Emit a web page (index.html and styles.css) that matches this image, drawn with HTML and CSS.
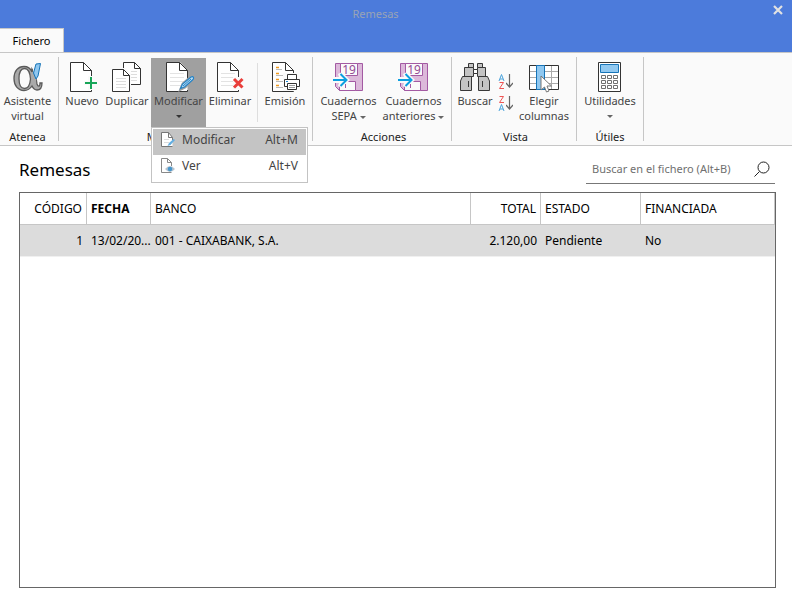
FILE: index.html
```html
<!DOCTYPE html>
<html lang="es">
<head>
<meta charset="utf-8">
<title>Remesas</title>
<link rel="stylesheet" href="styles.css">
</head>
<body>
<svg class="defs" aria-hidden="true">
  <symbol id="page" viewBox="0 0 32 32">
    <path d="M15.500 1.500H1.500V30.500H22.500V9.500z" fill="#fff"/>
    <path d="M22.500 25V9.500L14.500 1.500H1.500V30.500H22.500V29" fill="none" stroke="#333"/>
    <path d="M14.500 1.500V9.500H22.500" fill="none" stroke="#333"/>
    <path d="M5 12.500H19M5 16.500H19M5 20.500H19M5 24.500H19" stroke="#e3e3e3"/>
  </symbol>
  <symbol id="floppy" viewBox="0 0 32 32">
    <path d="M2.500 2.500H29.500V29.500H6.500L2.500 25.500z" fill="#dcb9da" stroke="#a35aa3"/>
    <path d="M7.500 2.500H24.500V14.500H7.500z" fill="#fafafa" stroke="#a35aa3"/>
    <path d="M9 20.500H22.500V29.500H6.500V22z" fill="#fafafa" stroke="#a35aa3"/>
    <path d="M0 16H6L5 13L9 11L17 19L9 27L5 25L6 22H0z" fill="#fafafa"/>
    <path d="M12.500 23V27" stroke="#a35aa3"/>
    <path d="M0 19H13M7.500 13L13.500 19L7.500 25" fill="none" stroke="#0c9fe0" stroke-width="2"/>
  </symbol>
  <symbol id="down" viewBox="0 0 7 16">
    <path d="M3.500 1V14M0 10L3.500 14L7 10" fill="none" stroke="#666" stroke-width="1.200"/>
  </symbol>
</svg>

<header class="titlebar">
  <h1 class="window-title">Remesas</h1>
  <button class="close" type="button" aria-label="Cerrar"><svg width="10" height="10" viewBox="0 0 10 10"><path d="M1 1L9 9M9 1L1 9" stroke="#e2e2e2" stroke-width="2.200"/></svg></button>
  <button class="tab" type="button">Fichero</button>
</header>

<nav class="ribbon">
  <section class="group group-atenea">
    <div class="tools">
      <button class="tool" type="button">
        <svg class="icon" viewBox="0 0 32 32">
          <path d="M20 8L23 13L26 9C25 14 24 18 25 23C26 26 28 26 28 22L30 22C30 27 28 29 25 29C22 29 21 27 20 25C18 28 15 29.500 12 29.500C6 29.500 2 24.500 2 17.500C2 10 6 5.500 12 5.500C16 5.500 18.500 7.500 20 11z" fill="#aaa" stroke="#5a5a5a" stroke-width="1.300"/>
          <path d="M12.500 7.500C9 7.500 7 11 7 17.500C7 24 9 27.500 12.500 27.500C16 27.500 18 24 18.500 18C18 11 16 7.500 12.500 7.500z" fill="#fafafa" stroke="#5a5a5a" stroke-width="1.300"/>
          <path d="M22 1H32V10L26 21L21 10z" fill="#fafafa"/>
          <path d="M24 3L28.500 2.500L26 15L24 18L21.500 12z" fill="#90c8f0" stroke="#1674b8"/>
        </svg>
        <span>Asistente<br>virtual</span>
      </button>
    </div>
    <h2 class="group-name">Atenea</h2>
  </section>

  <section class="group group-edit">
    <div class="tools">
      <button class="tool tool-new" type="button">
        <svg class="icon" viewBox="0 0 32 32">
          <path d="M25.500 18V9.500L17.500 1.500H4.500V30.500H25.500V28" fill="#fff" stroke="#333"/>
          <path d="M17.500 1.500V9.500H25.500" fill="none" stroke="#333"/>
          <path d="M24 15V29M18 22H32" stroke="#fafafa" stroke-width="4"/>
          <path d="M25 16V28M19 22H31" stroke="#18a558" stroke-width="2"/>
        </svg>
        <span>Nuevo</span>
      </button>
      <button class="tool tool-copy" type="button">
        <svg class="icon" viewBox="0 0 32 32">
          <path d="M12.500 1.500H23.500L29.500 7.500V23.500H12.500z" fill="#fff" stroke="#333"/>
          <path d="M23.500 1.500V7.500H29.500" fill="none" stroke="#333"/>
          <path d="M20 10.500H26M20 13.500H26M20 16.500H26M20 19.500H26" stroke="#ddd"/>
          <path d="M0 7H14L20 13V32H0z" fill="#fafafa"/>
          <path d="M1.500 8.500H12.500L18.500 14.500V30.500H1.500z" fill="#fff" stroke="#333"/>
          <path d="M12.500 8.500V14.500H18.500" fill="none" stroke="#333"/>
          <path d="M5 17.500H15M5 20.500H15M5 23.500H15M5 26.500H15" stroke="#ddd"/>
        </svg>
        <span>Duplicar</span>
      </button>
      <div class="dropdown">
        <button class="tool tool-modify" type="button" aria-expanded="true">
          <svg class="icon" viewBox="0 0 32 32">
            <use href="#page" x="2" width="32" height="32"/>
            <path d="M18 28L20 23L29 15L31 17L22 26z" fill="#a0a0a0" stroke="#a0a0a0" stroke-width="3"/>
            <path d="M17.500 27.500L19.500 23L28 16Q30 15 30.500 16.500Q31 18 29.500 19L21.500 26z" fill="#b8dcf4" stroke="#2583c6" stroke-width="1.200"/>
            <path d="M20 25L28 18" stroke="#2583c6"/>
          </svg>
          <span>Modificar</span>
          <i class="caret"></i>
        </button>
        <div class="menu" role="menu">
          <button class="menu-item is-active" type="button" role="menuitem">
            <svg class="menu-icon" viewBox="0 0 16 16">
              <path d="M12.500 8V5.500L8.500 .5H1.500V14.500H12.500" fill="#fff" stroke="#777"/>
              <path d="M8.500 .5V5.500H12.500" fill="none" stroke="#777"/>
              <path d="M4 7.500H9M4 10.500H9" stroke="#ddd"/>
              <path d="M7.500 14L9 11L13.500 7L15 8L10.500 13z" fill="#64aee0"/>
            </svg>
            <span>Modificar</span><kbd>Alt+M</kbd>
          </button>
          <button class="menu-item" type="button" role="menuitem">
            <svg class="menu-icon" viewBox="0 0 16 16">
              <path d="M11.500 8V4.500L7.500 .5H1.500V14.500H11.500" fill="#fff" stroke="#888"/>
              <path d="M7.500 .5V4.500H11.500" fill="none" stroke="#888"/>
              <path d="M5 11Q10 5 15 11Q10 17 5 11z" fill="#b8c4ce"/>
              <circle cx="10" cy="11" r="2.300" fill="#4796cc"/>
            </svg>
            <span>Ver</span><kbd>Alt+V</kbd>
          </button>
        </div>
      </div>
      <button class="tool tool-delete" type="button">
        <svg class="icon" viewBox="0 0 32 32">
          <use href="#page" x="2" width="32" height="32"/>
          <path d="M19 16H32V28H19z" fill="#fafafa"/>
          <path d="M20 18L28.500 26.500M28.500 18L20 26.500" stroke="#e93e3a" stroke-width="3"/>
        </svg>
        <span>Eliminar</span>
      </button>
      <span class="divider"></span>
      <button class="tool tool-issue" type="button">
        <svg class="icon" viewBox="0 0 32 32">
          <path d="M24.500 12V9.500L16.500 1.500H3.500V30.500H24.500V28" fill="#fff" stroke="#333"/>
          <path d="M16.500 1.500V9.500H24.500" fill="none" stroke="#333"/>
          <path d="M7 6.500H10M7 12.500H10M7 18.500H10M7 24.500H10" stroke="#f09a20" stroke-width="1.500"/>
          <path d="M7 8.500H13M7 14.500H15M7 20.500H14M7 26.500H14" stroke="#bbb"/>
          <path d="M14 12H32V30H14z" fill="#fafafa"/>
          <path d="M18.500 19V13.500H27.500V19M18 25.500H15.500V18.500H30.500V25.500H28" fill="#fff" stroke="#333"/>
          <path d="M18.500 22.500H27.500V28.500H18.500z" fill="#fff" stroke="#333"/>
          <path d="M20 24.500H26M20 26.500H26" stroke="#999"/>
          <path d="M17 20.500H19" stroke="#1684d0"/>
        </svg>
        <span>Emisión</span>
      </button>
    </div>
    <h2 class="group-name">Mantenimiento</h2>
  </section>

  <section class="group group-actions">
    <div class="tools">
      <button class="tool tool-book" type="button">
        <svg class="icon" viewBox="0 0 32 32"><use href="#floppy" width="32" height="32"/><text x="16" y="13" class="floppy-day">19</text></svg>
        <span>Cuadernos<br>SEPA <i class="caret"></i></span>
      </button>
      <button class="tool tool-book" type="button">
        <svg class="icon" viewBox="0 0 32 32"><use href="#floppy" width="32" height="32"/><text x="16" y="13" class="floppy-day">19</text></svg>
        <span>Cuadernos<br>anteriores <i class="caret"></i></span>
      </button>
    </div>
    <h2 class="group-name">Acciones</h2>
  </section>

  <section class="group group-view">
    <div class="tools">
      <button class="tool tool-find" type="button">
        <svg class="icon" viewBox="0 0 32 32">
          <g fill="#c4c4c4" stroke="#383838">
            <path d="M9.500 2.500H14.500V6.500H9.500zM18.500 2.500H23.500V6.500H18.500z"/>
            <path d="M5.500 6.500H14.500V15.500H5.500zM18.500 6.500H26.500V15.500H18.500z"/>
            <path d="M14.500 8.500H18.500V12.500H14.500z" fill="#fff"/>
            <path d="M3.500 15.500H12.500V29.500H1.500V20zM19.500 15.500H28.500L30.500 20V29.500H19.500z"/>
            <path d="M9.500 20V26M23.500 20V26"/>
          </g>
        </svg>
        <span>Buscar</span>
      </button>
      <div class="sorts">
        <button class="sort" type="button" aria-label="Orden ascendente">
          <svg width="16" height="18" viewBox="0 0 16 18"><g fill="none"><path d="M1 8L3.500 1.500L6 8M2 6H5" stroke="#4aa3dc"/><path d="M1.500 9.500H5.500L1.500 15.500H6" stroke="#ee5555"/></g><use href="#down" x="8" y="0" width="7" height="16"/></svg>
        </button>
        <button class="sort" type="button" aria-label="Orden descendente">
          <svg width="16" height="18" viewBox="0 0 16 18"><g fill="none"><path d="M1.500 1.500H5.500L1.500 7.500H6" stroke="#ee5555"/><path d="M1 16L3.500 9.500L6 16M2 14H5" stroke="#4aa3dc"/></g><use href="#down" x="8" y="0" width="7" height="16"/></svg>
        </button>
      </div>
      <button class="tool tool-columns" type="button">
        <svg class="icon" viewBox="0 0 32 32">
          <path d="M1.500 4.500H30.500V28.500H1.500z" fill="#fff" stroke="#333"/>
          <path d="M2 10.500H30M2 16.500H30M2 22.500H30M23.500 5V28" stroke="#aaa"/>
          <path d="M8.500 4.500H16.500V28.500H8.500z" fill="#90c8f0" stroke="#1674b8"/>
          <path d="M13 15V29L16.500 26L18.500 31L21 30L19 25H23.500z" fill="#fff" stroke="#777"/>
        </svg>
        <span>Elegir<br>columnas</span>
      </button>
    </div>
    <h2 class="group-name">Vista</h2>
  </section>

  <section class="group group-utils">
    <div class="tools">
      <button class="tool tool-utils" type="button">
        <svg class="icon" viewBox="0 0 32 32">
          <path d="M4.500 1.500H26.500V30.500H4.500z" fill="#fff" stroke="#333"/>
          <path d="M6.500 3.500H24.500V11.500H6.500z" fill="#90c8f0" stroke="#1674b8"/>
          <path d="M7.500 14.500H11.500V17.500H7.500zM13.500 14.500H17.500V17.500H13.500zM19.500 14.500H23.500V17.500H19.500zM7.500 19.500H11.500V22.500H7.500zM13.500 19.500H17.500V22.500H13.500zM19.500 19.500H23.500V22.500H19.500zM7.500 24.500H11.500V27.500H7.500zM13.500 24.500H17.500V27.500H13.500zM19.500 24.500H23.500V27.500H19.500z" fill="#fff" stroke="#707070"/>
        </svg>
        <span>Utilidades</span>
        <i class="caret"></i>
      </button>
    </div>
    <h2 class="group-name">Útiles</h2>
  </section>
</nav>

<main class="content">
  <div class="heading">
    <h2 class="page-title">Remesas</h2>
    <div class="search">
      <input type="search" placeholder="Buscar en el fichero (Alt+B)" aria-label="Buscar en el fichero">
      <svg width="16" height="16" viewBox="0 0 16 16"><circle cx="9.500" cy="6.500" r="5.500" fill="none" stroke="#222"/><path d="M5.500 10.500L.5 15.500" stroke="#222"/></svg>
    </div>
  </div>
  <div class="grid-frame">
    <table class="grid">
      <colgroup><col class="c-code"><col class="c-date"><col><col class="c-total"><col class="c-state"><col class="c-fin"></colgroup>
      <thead>
        <tr><th class="num">CÓDIGO</th><th class="sorted">FECHA</th><th>BANCO</th><th class="num">TOTAL</th><th>ESTADO</th><th>FINANCIADA</th></tr>
      </thead>
      <tbody>
        <tr><td class="num">1</td><td>13/02/20...</td><td>001 - CAIXABANK, S.A.</td><td class="num">2.120,00</td><td>Pendiente</td><td>No</td></tr>
      </tbody>
    </table>
  </div>
</main>
</body>
</html>
```
FILE: styles.css
```css
* { box-sizing: border-box; }

body {
  margin: 0;
  min-height: 100vh;
  display: flex;
  flex-direction: column;
  background: #fff;
  color: #000;
  font: 12px/16px "Noto Sans", sans-serif;
}

button, input { font: inherit; color: inherit; }
button { border: 0; padding: 0; background: none; }
h1, h2 { margin: 0; font-weight: 400; }
.defs { position: absolute; width: 0; height: 0; }

.titlebar {
  display: grid;
  grid-template-columns: 64px 1fr 64px;
  grid-template-rows: 28px 24px;
  background: #4c7bdb;
}
.window-title {
  grid-column: 2;
  padding-right: 41px;
  font-size: 11px;
  line-height: 28px;
  text-align: center;
  color: #99a3b5;
}
.close {
  justify-self: end;
  display: flex;
  align-items: center;
  height: 20px;
  padding: 0 9px;
}
.tab {
  grid-row: 2;
  grid-column: 1;
  border: solid #c8c8c8;
  border-width: 1px 1px 0 0;
  background: #fafafa;
  font-size: 11px;
}

.ribbon {
  display: flex;
  height: 94px;
  padding: 4px 0;
  border: solid #c6c6c6;
  border-width: 1px 0;
  background: #fafafa;
  color: #444;
  font-size: 11px;
  line-height: 15px;
}
.group {
  display: flex;
  flex-direction: column;
  border-right: 1px solid #c6c6c6;
}
.group-atenea { width: 59px; padding-right: 3px; }
.group-edit { width: 254px; padding-left: 2px; }
.group-actions { width: 139px; padding-left: 3px; }
.group-view { width: 125px; padding-left: 3px; }
.group-utils { width: 67px; }
.group-name {
  padding-top: 2px;
  font-size: 11px;
  line-height: 16px;
  text-align: center;
  white-space: nowrap;
  color: #222;
}
.tools { display: flex; padding-top: 1px; }
.group-atenea .tools, .group-utils .tools { justify-content: center; }
.tool {
  display: flex;
  flex-direction: column;
  align-items: center;
  height: 69px;
  padding-top: 3px;
  white-space: nowrap;
}
.icon { flex: none; width: 32px; height: 32px; }
.caret {
  display: inline-block;
  border: solid transparent;
  border-width: 3px 3px 0;
  border-top-color: #666;
  vertical-align: middle;
}
.tool > .caret { margin-top: 7px; }
.tool-new { width: 42px; }
.tool-copy { width: 48px; }
.tool-modify { width: 55px; background: #a0a0a0; }
.tool-modify > .caret { border-top-color: #333; }
.tool-delete { width: 48px; }
.tool-issue { width: 46px; }
.tool-book { width: 65px; }
.tool-find { width: 40px; }
.tool-columns { width: 54px; }
.divider { width: 1px; height: 59px; margin: 5px 4px 0 3px; background: #dedede; }
.floppy-day { font-size: 12px; text-anchor: middle; fill: #944b94; }
.sorts { display: flex; flex-direction: column; gap: 4px; padding: 15px 3px 0; }
.sort { height: 18px; }
.sort svg { display: block; }

.dropdown { position: relative; }
.menu {
  position: absolute;
  z-index: 1;
  top: 69px;
  left: 0;
  width: 157px;
  padding: 1px;
  border: 1px solid #c3c3c3;
  background: #fff;
  font-size: 12px;
}
.menu-item {
  display: flex;
  align-items: center;
  width: 100%;
  height: 26px;
  padding: 0 8px 5px 7px;
}
.menu-item.is-active { background: #c4c4c4; }
.menu-icon { width: 16px; height: 16px; margin-right: 6px; }
.menu-item kbd { margin-left: auto; font: inherit; }

.content {
  flex: 1;
  display: flex;
  flex-direction: column;
  padding: 8px 16px 26px 19px;
}
.heading { display: flex; justify-content: space-between; height: 38px; }
.page-title { font-size: 17px; line-height: 31px; }
.search {
  display: flex;
  align-items: center;
  width: 189px;
  height: 30px;
  margin-right: 1px;
  padding: 0 5px 0 6px;
  border-bottom: 1px solid #777;
}
.search input {
  flex: 1;
  min-width: 0;
  padding: 0;
  border: 0;
  outline: 0;
  background: none;
  font-size: 11px;
}
.search input::placeholder { color: #707070; opacity: 1; }

.grid-frame { flex: 1; border: 1px solid #666; }
.grid { width: 100%; table-layout: fixed; border-collapse: separate; border-spacing: 0; }
.c-code { width: 67px; }
.c-date { width: 64px; }
.c-total { width: 70px; }
.c-state { width: 100px; }
.c-fin { width: 134px; }
.grid th, .grid td {
  height: 32px;
  padding: 0 4px;
  text-align: left;
  font-weight: 400;
  white-space: nowrap;
}
.grid th { border: solid #c6c6c6; border-width: 0 1px 1px 0; }
.grid .sorted { font-weight: 700; }
.grid .num { text-align: right; }
.grid tbody tr { background: #dcdcdc; }
.grid td { border-bottom: 1px solid #f0f0f0; }
```
